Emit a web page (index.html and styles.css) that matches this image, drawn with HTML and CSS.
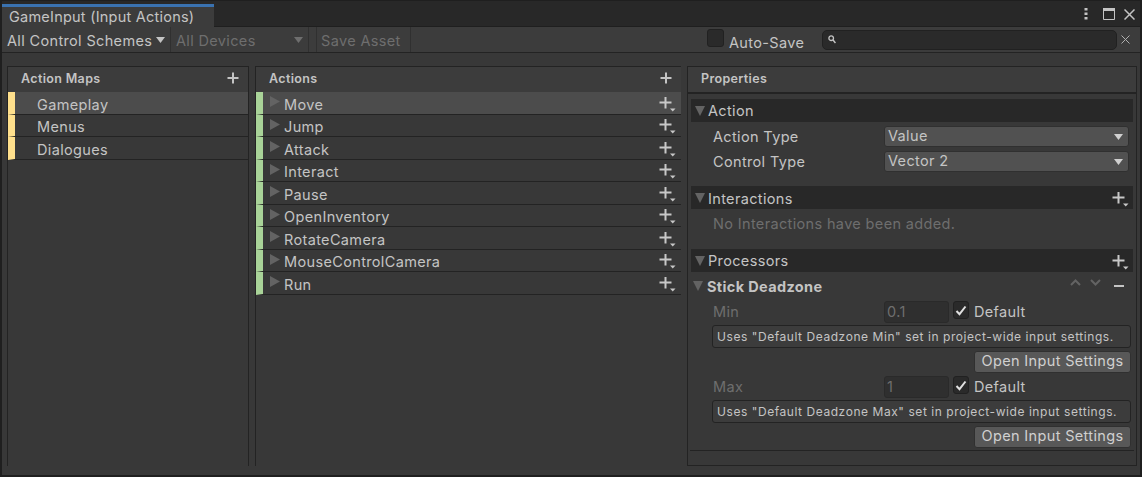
FILE: index.html
```html
<!DOCTYPE html>
<html>
<head>
	<title>GameInput (Input Actions)</title>
	<link rel="stylesheet" href="styles.css">
</head>
<body>
	<svg class="defs" width="0" height="0">
		<symbol id="plus" viewBox="0 0 12 12"><path d="M6 0.5V11.5M0.5 6H11.5" stroke="#c4c4c4" stroke-width="2"/></symbol>
		<symbol id="plus-more" viewBox="0 0 18 16"><path d="M7.500 1V12.500M1.500 6.500H13.500" stroke="#c8c8c8" stroke-width="2"/><path d="M12 12.500H17.500L14.750 15.500Z" fill="#c8c8c8"/></symbol>
		<symbol id="arrow-right" viewBox="0 0 10 11"><path d="M0 0L10 5.500L0 11Z" fill="#636363"/></symbol>
		<symbol id="arrow-down" viewBox="0 0 10 10"><path d="M0 0H10L5 10Z" fill="#636363"/></symbol>
		<symbol id="caret" viewBox="0 0 9 6"><path d="M0 0H9L4.500 6Z" fill="currentColor"/></symbol>
		<symbol id="check" viewBox="0 0 12 11"><path d="M1.500 6L4.500 9.200L10.500 1.500" fill="none" stroke="#e0e0e0" stroke-width="2"/></symbol>
	</svg>

	<div class="window">
		<div class="tabbar">
			<div class="tab">GameInput (Input Actions)</div>
			<div class="window-icons">
				<svg class="icon-menu" width="4" height="12" viewBox="0 0 4 12"><g fill="#c4c4c4"><rect x="0.500" y="0" width="3" height="2.500"/><rect x="0.500" y="4.500" width="3" height="2.500"/><rect x="0.500" y="9" width="3" height="2.500"/></g></svg>
				<svg width="12" height="12" viewBox="0 0 12 12"><path d="M0.500 0.500H11.500V11.500H0.500Z" fill="none" stroke="#c4c4c4"/><rect x="0" y="0" width="12" height="3" fill="#c4c4c4"/></svg>
				<svg width="11" height="11" viewBox="0 0 11 11"><path d="M0.500 0.500L10.500 10.500M10.500 0.500L0.500 10.500" stroke="#c4c4c4" stroke-width="1.500"/></svg>
			</div>
		</div>

		<div class="toolbar">
			<div class="tool tool-schemes">All Control Schemes<svg class="tool-caret" width="9" height="6"><use href="#caret"/></svg></div>
			<div class="tool tool-devices muted">All Devices<svg class="tool-caret" width="9" height="6"><use href="#caret"/></svg></div>
			<div class="tool tool-save muted">Save Asset</div>
			<div class="autosave">
				<span class="autosave-box"></span>
				<span class="autosave-label">Auto-Save</span>
			</div>
			<div class="search">
				<svg width="8" height="9" viewBox="0 0 8 9"><circle cx="3.200" cy="3.200" r="2.300" fill="none" stroke="#c4c4c4" stroke-width="1.300"/><path d="M4.800 4.800L7.500 8" stroke="#c4c4c4" stroke-width="1.500"/></svg>
			</div>
			<svg class="search-clear" width="9" height="9" viewBox="0 0 9 9"><path d="M0.500 0.500L8.500 8.500M8.500 0.500L0.500 8.500" stroke="#b0b0b0"/></svg>
		</div>

		<div class="panes">
			<div class="pane pane-maps">
				<div class="pane-head">
					<span>Action Maps</span>
					<svg class="head-plus" width="12" height="12"><use href="#plus"/></svg>
				</div>
				<div class="row map selected"><span class="row-label">Gameplay</span></div>
				<div class="row map"><span class="row-label">Menus</span></div>
				<div class="row map"><span class="row-label">Dialogues</span></div>
			</div>

			<div class="pane pane-actions">
				<div class="pane-head">
					<span>Actions</span>
					<svg class="head-plus" width="12" height="12"><use href="#plus"/></svg>
				</div>
				<div class="row action selected"><svg class="fold" width="10" height="11"><use href="#arrow-right"/></svg><span class="row-label">Move</span><svg class="row-plus" width="18" height="16"><use href="#plus-more"/></svg></div>
				<div class="row action"><svg class="fold" width="10" height="11"><use href="#arrow-right"/></svg><span class="row-label">Jump</span><svg class="row-plus" width="18" height="16"><use href="#plus-more"/></svg></div>
				<div class="row action"><svg class="fold" width="10" height="11"><use href="#arrow-right"/></svg><span class="row-label">Attack</span><svg class="row-plus" width="18" height="16"><use href="#plus-more"/></svg></div>
				<div class="row action"><svg class="fold" width="10" height="11"><use href="#arrow-right"/></svg><span class="row-label">Interact</span><svg class="row-plus" width="18" height="16"><use href="#plus-more"/></svg></div>
				<div class="row action"><svg class="fold" width="10" height="11"><use href="#arrow-right"/></svg><span class="row-label">Pause</span><svg class="row-plus" width="18" height="16"><use href="#plus-more"/></svg></div>
				<div class="row action"><svg class="fold" width="10" height="11"><use href="#arrow-right"/></svg><span class="row-label">OpenInventory</span><svg class="row-plus" width="18" height="16"><use href="#plus-more"/></svg></div>
				<div class="row action"><svg class="fold" width="10" height="11"><use href="#arrow-right"/></svg><span class="row-label">RotateCamera</span><svg class="row-plus" width="18" height="16"><use href="#plus-more"/></svg></div>
				<div class="row action"><svg class="fold" width="10" height="11"><use href="#arrow-right"/></svg><span class="row-label">MouseControlCamera</span><svg class="row-plus" width="18" height="16"><use href="#plus-more"/></svg></div>
				<div class="row action"><svg class="fold" width="10" height="11"><use href="#arrow-right"/></svg><span class="row-label">Run</span><svg class="row-plus" width="18" height="16"><use href="#plus-more"/></svg></div>
			</div>

			<div class="pane pane-props">
				<div class="pane-head props-head"><span>Properties</span></div>

				<div class="section section-action">
					<svg width="10" height="10"><use href="#arrow-down"/></svg><span>Action</span>
				</div>
				<div class="field field-first">
					<span class="field-label">Action Type</span>
					<div class="select">Value<svg width="9" height="6"><use href="#caret"/></svg></div>
				</div>
				<div class="field field-second">
					<span class="field-label">Control Type</span>
					<div class="select">Vector 2<svg width="9" height="6"><use href="#caret"/></svg></div>
				</div>

				<div class="section section-interactions">
					<svg width="10" height="10"><use href="#arrow-down"/></svg><span class="section-title">Interactions</span>
					<svg class="section-plus" width="18" height="16"><use href="#plus-more"/></svg>
				</div>
				<div class="empty-note">No Interactions have been added.</div>

				<div class="section section-processors">
					<svg width="10" height="10"><use href="#arrow-down"/></svg><span>Processors</span>
					<svg class="section-plus" width="18" height="16"><use href="#plus-more"/></svg>
				</div>

				<div class="processor">
					<svg width="10" height="10"><use href="#arrow-down"/></svg><span class="processor-name">Stick Deadzone</span>
					<div class="processor-tools">
						<svg class="tool-arrow" width="11" height="7" viewBox="0 0 11 7"><path d="M1 6L5.500 1.500L10 6" fill="none" stroke="#636363" stroke-width="2"/></svg>
						<svg class="tool-arrow" width="11" height="7" viewBox="0 0 11 7"><path d="M1 1L5.500 5.500L10 1" fill="none" stroke="#636363" stroke-width="2"/></svg>
						<svg class="tool-minus" width="10" height="2" viewBox="0 0 10 2"><rect width="10" height="2" fill="#c4c4c4"/></svg>
					</div>
				</div>

				<div class="param">
					<span class="param-label">Min</span>
					<div class="num">0.1</div>
					<span class="check"><svg width="12" height="11"><use href="#check"/></svg></span>
					<span class="check-label">Default</span>
				</div>
				<div class="help">Uses "Default Deadzone Min" set in project-wide input settings.</div>
				<div class="button-row"><div class="button">Open Input Settings</div></div>

				<div class="param param-second">
					<span class="param-label">Max</span>
					<div class="num">1</div>
					<span class="check"><svg width="12" height="11"><use href="#check"/></svg></span>
					<span class="check-label">Default</span>
				</div>
				<div class="help">Uses "Default Deadzone Max" set in project-wide input settings.</div>
				<div class="button-row"><div class="button">Open Input Settings</div></div>

				<div class="props-end"></div>
			</div>
		</div>
	</div>
</body>
</html>
```

FILE: styles.css
```css
* {
	box-sizing: border-box;
}

html, body {
	margin: 0;
	height: 100%;
	overflow: hidden;
}

body {
	background: #1f1f1f;
	font-family: Inter, "Noto Sans", sans-serif;
	font-size: 14.5px;
	letter-spacing: 0.35px;
	color: #c4c4c4;
}

.defs {
	display: block;
}

.window {
	display: flex;
	flex-direction: column;
	height: 475px;
	margin-left: 2px;
	width: 1138px;
	background: #383838;
}

/* tab strip */
.tabbar {
	display: flex;
	height: 27px;
	flex: none;
	background: #282828;
	border-top: 1px solid #1f1f1f;
	border-bottom: 1px solid #1f1f1f;
	padding-top: 3px;
}

.tab {
	width: 212px;
	height: 23px;
	padding: 1px 0 0 7px;
	background: #3c3c3c;
	border-top: 3px solid #3a72b0;
	line-height: 17px;
	letter-spacing: 0.23px;
	white-space: nowrap;
}

.window-icons {
	display: flex;
	align-items: center;
	gap: 9px;
	margin-left: auto;
	padding: 0 5px 2px 0;
}

.icon-menu {
	margin-right: 6px;
}

/* toolbar */
.toolbar {
	display: flex;
	align-items: center;
	height: 26px;
	flex: none;
	background: #3c3c3c;
	border-bottom: 1px solid #232323;
}

.tool {
	display: flex;
	align-items: center;
	height: 25px;
	padding: 2px 0 0 5px;
	border-right: 1px solid #303030;
	white-space: nowrap;
}

.tool-schemes {
	width: 169px;
}

.tool-devices {
	width: 138px;
	border-left: 0;
}

.tool-save {
	width: 95px;
	margin-left: 7px;
	padding-left: 4px;
	border-left: 1px solid #303030;
}

.tool-caret {
	margin: -2px 0 0 4px;
	color: #c4c4c4;
}

.tool-devices .tool-caret {
	margin-left: auto;
	margin-right: 5px;
	color: #6e6e6e;
}

.muted {
	color: #6e6e6e;
}

.autosave {
	display: flex;
	margin-left: 296px;
	width: 115px;
	height: 25px;
}

.autosave-box {
	width: 17px;
	height: 18px;
	margin-top: 2px;
	background: #2a2a2a;
	border: 1px solid #212121;
	border-radius: 3px;
}

.autosave-label {
	margin: 7px 0 0 5px;
	line-height: 17px;
}

.search {
	display: flex;
	align-items: center;
	width: 295px;
	height: 20px;
	padding-left: 5px;
	background: #2a2a2a;
	border: 1px solid #212121;
	border-radius: 5px;
}

.search-clear {
	margin-left: 4px;
}

/* the three panes */
.panes {
	display: flex;
	flex: 1;
	padding: 13px 3px 9px 5px;
	gap: 6px;
}

.pane {
	display: flex;
	flex-direction: column;
	flex: none;
	border: 1px solid #232323;
	border-bottom: 0;
}

.pane-maps {
	width: 242px;
}

.pane-actions {
	width: 426px;
	border-right: 0;
}

.pane-props {
	width: 450px;
	border-bottom: 1px solid #232323;
}

.pane-head {
	display: flex;
	align-items: center;
	height: 25px;
	flex: none;
	padding: 0 9px 2px 13px;
	background: #3c3c3c;
	font-size: 12.5px;
	font-weight: 600;
}

.head-plus {
	margin: 0 0 1px auto;
}

/* rows */
.row {
	display: flex;
	align-items: center;
	height: 22.5px;
	flex: none;
	border-bottom: 1px solid #232323;
}

.row.selected {
	background: #4c4c4c;
}

.row-label {
	padding-top: 3px;
}

.map {
	padding-left: 22px;
	border-left: 7px solid #ffe08c;
}

.action {
	padding-left: 7px;
	border-left: 7px solid #a9d398;
}

.fold {
	margin: -2px 4px 0 0;
	flex: none;
}

.row-plus {
	margin: 2px 5px 0 auto;
}

/* properties */
.props-head {
	height: 27px;
	border-bottom: 2px solid #232323;
}

.section {
	display: flex;
	align-items: center;
	gap: 3px;
	height: 23px;
	flex: none;
	margin: 0 3px;
	padding-left: 4px;
	background: #282828;
}

.section-action {
	margin-top: 5px;
}

.section-interactions {
	margin-top: 14px;
}

.section-title {
	padding-top: 2px;
}

.section-processors {
	margin-top: 14px;
}

.section-plus {
	margin: 2px 4px 0 auto;
}

.field {
	display: flex;
	align-items: center;
	flex: none;
	padding-left: 25px;
}

.field-first {
	margin-top: 4px;
}

.field-second {
	margin-top: 4px;
}

.field-label {
	width: 171px;
}

.select {
	display: flex;
	align-items: center;
	justify-content: space-between;
	width: 245px;
	height: 21px;
	padding: 0 5px 2px 3px;
	background: #515151;
	border: 1px solid #303030;
	border-radius: 3px;
}

.select svg {
	margin-top: 2px;
	color: #d0d0d0;
}

.empty-note {
	flex: none;
	padding: 6px 0 0 25px;
	height: 26px;
	line-height: 18px;
	color: #6e6e6e;
}

.processor {
	display: flex;
	align-items: center;
	gap: 4px;
	flex: none;
	height: 26px;
	margin-top: 1px;
	padding-left: 5px;
}

.processor-name {
	font-weight: 700;
}

.processor-tools {
	display: flex;
	align-items: center;
	gap: 9px;
	margin-left: auto;
	margin-right: 12px;
}

.tool-arrow {
	margin-bottom: 7px;
}

.tool-minus {
	margin-left: 4px;
}

.param {
	display: flex;
	align-items: center;
	flex: none;
	height: 23px;
	margin-top: 1px;
	padding-left: 25px;
}

.param-second {
	margin-top: 2px;
}

.param-label {
	width: 171px;
	color: #6e6e6e;
}

.num {
	width: 65px;
	height: 22px;
	padding-left: 2px;
	line-height: 20px;
	background: #2f2f2f;
	border: 1px solid #2a2a2a;
	border-radius: 3px;
	color: #6e6e6e;
}

.check {
	display: flex;
	align-items: center;
	justify-content: center;
	align-self: flex-start;
	width: 16px;
	height: 18px;
	margin: 1px 0 0 4px;
	background: #2a2a2a;
	border: 1px solid #212121;
	border-radius: 3px;
}

.check-label {
	margin-left: 5px;
}

.help {
	flex: none;
	height: 23px;
	margin: 2px 5px 0 24px;
	padding-left: 4px;
	font-size: 12px;
	line-height: 21px;
	letter-spacing: 0.56px;
	white-space: nowrap;
	background: #3c3c3c;
	border: 1px solid #232323;
	border-radius: 3px;
}

.button-row {
	display: flex;
	justify-content: flex-end;
	flex: none;
	margin: 3px 5px 0 0;
}

.button {
	width: 157px;
	height: 22px;
	text-align: center;
	line-height: 18px;
	background: #585858;
	border: 1px solid #303030;
	border-radius: 3px;
	color: #d0d0d0;
}

.props-end {
	flex: none;
	height: 1px;
	margin: 2px 2px 0;
	background: #232323;
}
```
